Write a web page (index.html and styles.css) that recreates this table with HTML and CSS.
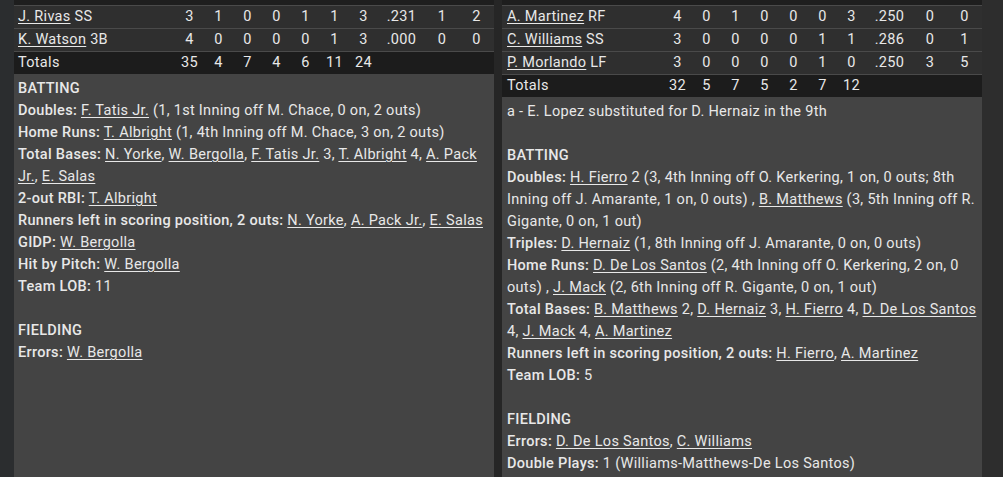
FILE: index.html
```html
<!DOCTYPE html>
<html>
<head>
<meta charset="utf-8">
<link rel="stylesheet" href="styles.css">
</head>
<body>
<div class="page">
  <section class="panel">
    <div class="head-tail"></div>
    <div class="row">
      <div class="name"><a>J. Rivas</a> SS</div>
      <div>3</div><div>1</div><div>0</div><div>0</div><div>1</div><div>1</div><div>3</div><div>.231</div><div>1</div><div>2</div>
    </div>
    <div class="row">
      <div class="name"><a>K. Watson</a> 3B</div>
      <div>4</div><div>0</div><div>0</div><div>0</div><div>0</div><div>1</div><div>3</div><div>.000</div><div>0</div><div>0</div>
    </div>
    <div class="row totals">
      <div class="name">Totals</div>
      <div>35</div><div>4</div><div>7</div><div>4</div><div>6</div><div>11</div><div>24</div><div></div><div></div><div></div>
    </div>
    <div class="notes">
      <p class="h">BATTING</p>
      <p><b>Doubles:</b> <a>F. Tatis Jr.</a> (1, 1st Inning off M. Chace, 0 on, 2 outs)</p>
      <p><b>Home Runs:</b> <a>T. Albright</a> (1, 4th Inning off M. Chace, 3 on, 2 outs)</p>
      <p><b>Total Bases:</b> <a>N. Yorke</a>, <a>W. Bergolla</a>, <a>F. Tatis Jr.</a> 3, <a>T. Albright</a> 4, <a>A. Pack Jr.</a>, <a>E. Salas</a></p>
      <p><b>2-out RBI:</b> <a>T. Albright</a></p>
      <p><b>Runners left in scoring position, 2 outs:</b> <a>N. Yorke</a>, <a>A. Pack Jr.</a>, <a>E. Salas</a></p>
      <p><b>GIDP:</b> <a>W. Bergolla</a></p>
      <p><b>Hit by Pitch:</b> <a>W. Bergolla</a></p>
      <p><b>Team LOB:</b> 11</p>
      <p class="blank">&nbsp;</p>
      <p class="h">FIELDING</p>
      <p><b>Errors:</b> <a>W. Bergolla</a></p>
    </div>
  </section>
  <section class="panel">
    <div class="head-tail"></div>
    <div class="row">
      <div class="name"><a>A. Martinez</a> RF</div>
      <div>4</div><div>0</div><div>1</div><div>0</div><div>0</div><div>0</div><div>3</div><div>.250</div><div>0</div><div>0</div>
    </div>
    <div class="row">
      <div class="name"><a>C. Williams</a> SS</div>
      <div>3</div><div>0</div><div>0</div><div>0</div><div>0</div><div>1</div><div>1</div><div>.286</div><div>0</div><div>1</div>
    </div>
    <div class="row">
      <div class="name"><a>P. Morlando</a> LF</div>
      <div>3</div><div>0</div><div>0</div><div>0</div><div>0</div><div>1</div><div>0</div><div>.250</div><div>3</div><div>5</div>
    </div>
    <div class="row totals">
      <div class="name">Totals</div>
      <div>32</div><div>5</div><div>7</div><div>5</div><div>2</div><div>7</div><div>12</div><div></div><div></div><div></div>
    </div>
    <div class="notes">
      <p>a - E. Lopez substituted for D. Hernaiz in the 9th</p>
      <p class="blank">&nbsp;</p>
      <p class="h">BATTING</p>
      <p><b>Doubles:</b> <a>H. Fierro</a> 2 (3, 4th Inning off O. Kerkering, 1 on, 0 outs; 8th Inning off J. Amarante, 1 on, 0 outs) , <a>B. Matthews</a> (3, 5th Inning off R. Gigante, 0 on, 1 out)</p>
      <p><b>Triples:</b> <a>D. Hernaiz</a> (1, 8th Inning off J. Amarante, 0 on, 0 outs)</p>
      <p><b>Home Runs:</b> <a>D. De Los Santos</a> (2, 4th Inning off O. Kerkering, 2 on, 0 outs) , <a>J. Mack</a> (2, 6th Inning off R. Gigante, 0 on, 1 out)</p>
      <p><b>Total Bases:</b> <a>B. Matthews</a> 2, <a>D. Hernaiz</a> 3, <a>H. Fierro</a> 4, <a>D. De Los Santos</a> 4, <a>J. Mack</a> 4, <a>A. Martinez</a></p>
      <p><b>Runners left in scoring position, 2 outs:</b> <a>H. Fierro</a>, <a>A. Martinez</a></p>
      <p><b>Team LOB:</b> 5</p>
      <p class="blank">&nbsp;</p>
      <p class="h">FIELDING</p>
      <p><b>Errors:</b> <a>D. De Los Santos</a>, <a>C. Williams</a></p>
      <p><b>Double Plays:</b> 1 (Williams-Matthews-De Los Santos)</p>
    </div>
  </section>
</div>
</body>
</html>
```

FILE: styles.css
```css
html, body {
  margin: 0;
  padding: 0;
  height: 100%;
  overflow: hidden;
}
body {
  background: #2b2d2f;
  font-family: Roboto, "Liberation Sans", sans-serif;
  font-size: 14.5px;
  letter-spacing: 0.3px;
  color: #e8e8e8;
}
.page {
  display: flex;
  gap: 8px;
  padding-left: 14px;
  height: 477px;
  background: linear-gradient(to right, #2b2d2f 0 14px, #262626 14px);
}
.page::after {
  content: "";
  flex: 1;
  background: #2d2d2d;
  margin-left: -8px;
}
.panel {
  width: 480px;
  flex: none;
  display: flex;
  flex-direction: column;
  background: #444444;
}
.head-tail {
  height: 5px;
  background: #1e1e1e;
}
.row {
  display: grid;
  grid-template-columns: 161px repeat(7, 29px) 47px 34px 1fr;
  height: 22px;
  line-height: 22px;
  border-top: 1px solid #4a4a4a;
  background: #2f2f2f;
  text-align: center;
}
.row .name {
  text-align: left;
  padding-left: 4px;
  white-space: nowrap;
}
.panel + .panel .row .name,
.panel + .panel .notes {
  padding-left: 5px;
}
.row.totals {
  background: #1c1c1c;
}
a {
  color: inherit;
  text-decoration: underline;
  text-underline-offset: 2px;
  text-decoration-thickness: 1px;
}
.notes {
  flex: 1;
  padding: 4px 3px 0 4px;
  line-height: 22px;
  background: #444444;
}
.notes p {
  margin: 0;
}
.notes b, .notes .h {
  font-weight: 500;
}
```
